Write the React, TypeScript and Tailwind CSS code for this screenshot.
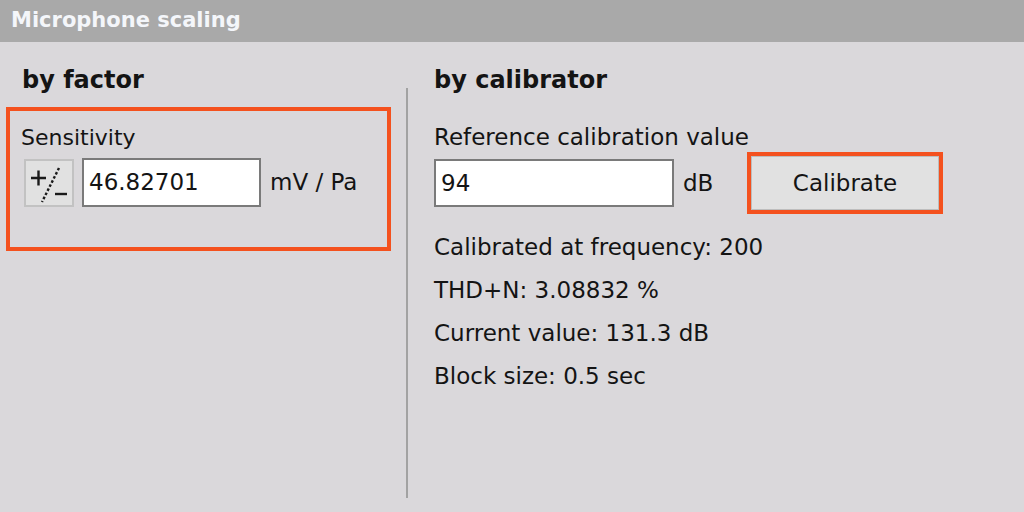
function PlusMinus() {
  return (
    <svg width="46" height="44" viewBox="0 0 46 44" className="block">
      <g stroke="#1a1a1a" strokeWidth="2.4" fill="none">
        <path d="M5 17h15M12.5 9.5v15" />
        <path d="M33 7 L16 41" strokeDasharray="2.6 2" />
        <path d="M29 33h12" />
      </g>
    </svg>
  );
}

export default function App() {
  const font = { fontFamily: '"DejaVu Sans", Verdana, sans-serif' };
  return (
    <div className="h-[512px] w-[1024px] overflow-hidden bg-[#dad8db] text-[#141414]" style={font}>
      <div className="flex h-[42px] items-center bg-[#a9a9a9] px-[11px] text-[21px] font-bold text-[#f4f6fa]">
        Microphone scaling
      </div>
      <div className="flex">
        <div className="w-[406px] shrink-0 pl-[6px] pt-[23px]">
          <div className="pl-[16px] text-[24px] font-bold leading-[30px]">by factor</div>
          <div className="mt-[12px] h-[144px] w-[385px] border-[4px] border-[#f4511e] pl-[11px] pt-[13px]">
            <div className="text-[22px] leading-[28px]">Sensitivity</div>
            <div className="mt-[6px] flex items-center">
              <div className="ml-[3px] flex h-[48px] w-[50px] items-center justify-center border-2 border-[#c2c2c2] bg-[#e1e1e1]">
                <PlusMinus />
              </div>
              <div className="ml-[8px] flex h-[49px] w-[179px] items-center border-2 border-[#7a7a7a] bg-white pl-[5px] text-[23px]">46.82701</div>
              <div className="ml-[9px] text-[23px]">mV / Pa</div>
            </div>
          </div>
        </div>
        <div className="mt-[46px] h-[410px] w-[2px] shrink-0 bg-[#a2a2a2]" />
        <div className="pl-[26px] pt-[23px]">
          <div className="text-[24px] font-bold leading-[30px]">by calibrator</div>
          <div className="mt-[28px] text-[23px] leading-[28px]">Reference calibration value</div>
          <div className="mt-[1px] flex items-center">
            <div className="flex h-[48px] w-[240px] items-center border-2 border-[#7a7a7a] bg-white pl-[5px] text-[23px]">94</div>
            <div className="ml-[9px] w-[64px] text-[23px]">dB</div>
            <div className="border-[4px] border-[#f4511e]">
              <div className="flex h-[54px] w-[188px] items-center justify-center border border-[#bdbdbd] bg-[#e1e1e1] text-[23px]">Calibrate</div>
            </div>
          </div>
          <div className="mt-[12px] flex flex-col text-[23px] leading-[43px]">
            <div>Calibrated at frequency: 200</div>
            <div>THD+N: 3.08832 %</div>
            <div>Current value: 131.3 dB</div>
            <div>Block size: 0.5 sec</div>
          </div>
        </div>
      </div>
    </div>
  );
}
